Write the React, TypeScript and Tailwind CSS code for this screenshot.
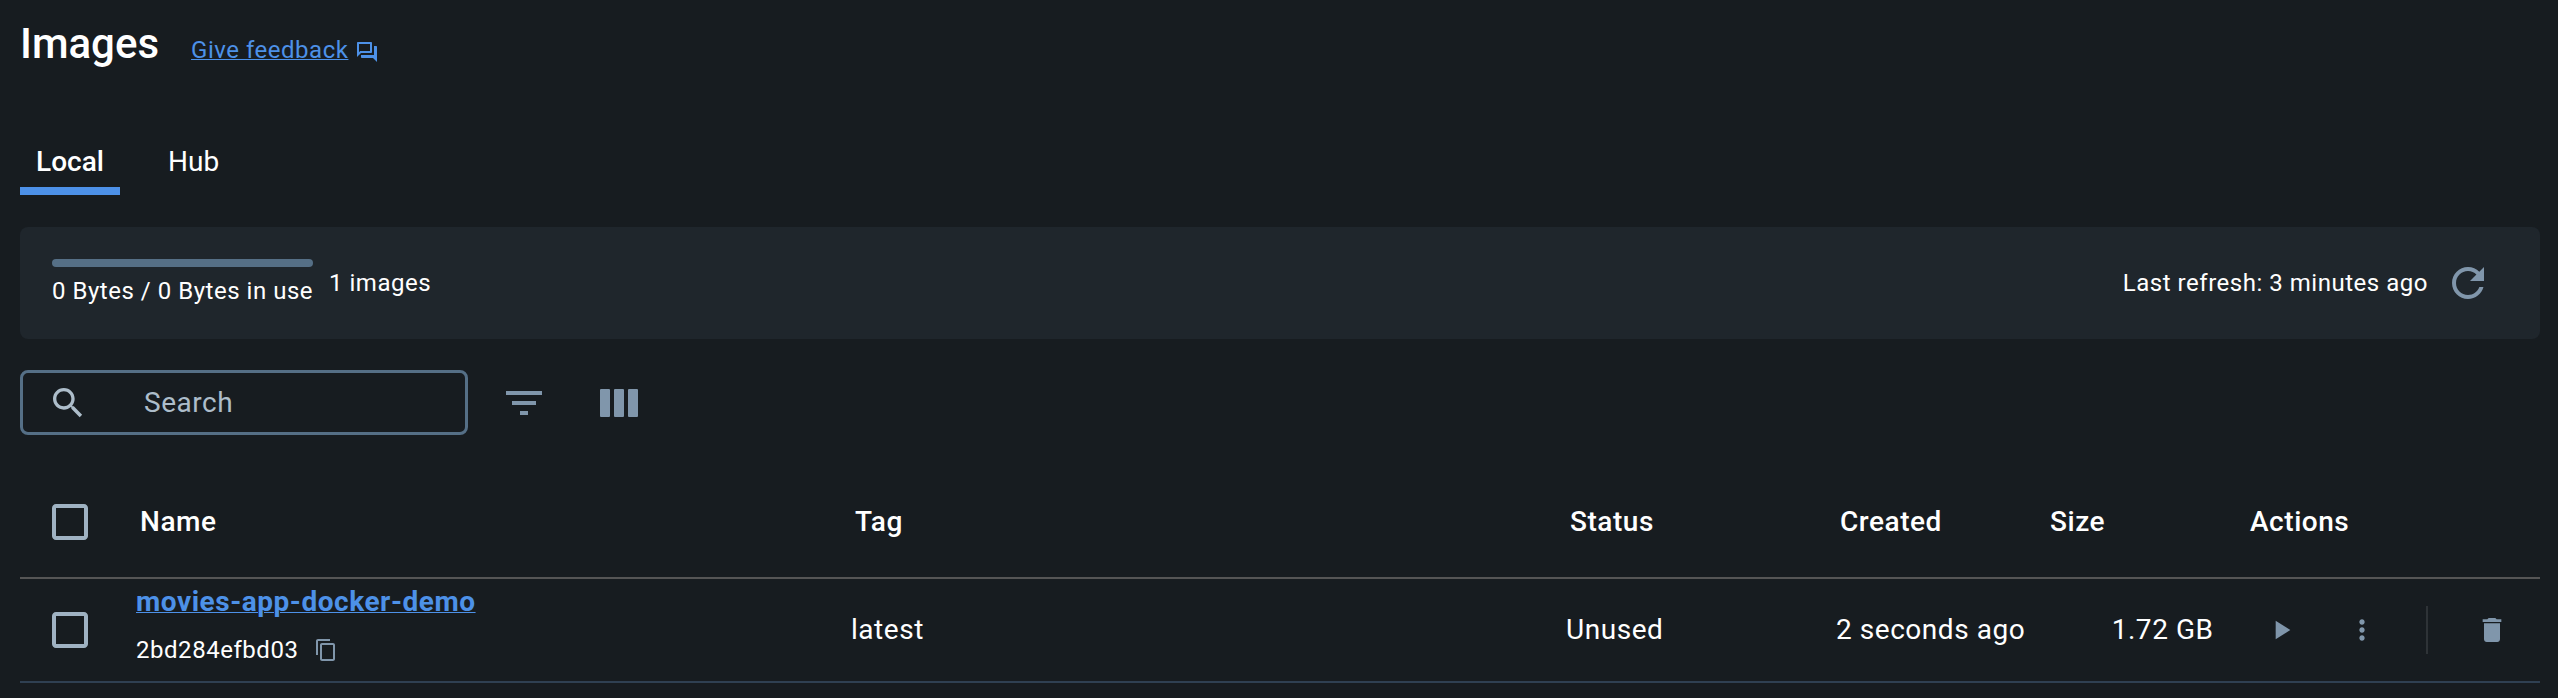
import React from "react";

type IconProps = { d: string; className: string };

function Icon({ d, className }: IconProps) {
  return (
    <svg viewBox="0 0 24 24" fill="currentColor" className={`block shrink-0 ${className}`}>
      <path d={d} />
    </svg>
  );
}

const icons = {
  feedback:
    "M15 4v7H5.17L4 12.17V4h11m1-2H3c-.55 0-1 .45-1 1v14l4-4h10c.55 0 1-.45 1-1V3c0-.55-.45-1-1-1zm5 4h-2v9H6v2c0 .55.45 1 1 1h11l4 4V7c0-.55-.45-1-1-1z",
  refresh:
    "M17.65 6.35C16.2 4.9 14.21 4 12 4c-4.42 0-7.99 3.58-7.99 8s3.57 8 7.99 8c3.73 0 6.84-2.55 7.73-6h-2.08c-.82 2.33-3.04 4-5.65 4-3.31 0-6-2.69-6-6s2.69-6 6-6c1.66 0 3.14.69 4.22 1.78L13 11h7V4l-2.35 2.35z",
  search:
    "M15.5 14h-.79l-.28-.27C15.41 12.59 16 11.11 16 9.5 16 5.91 13.09 3 9.5 3S3 5.91 3 9.5 5.91 16 9.5 16c1.61 0 3.09-.59 4.23-1.57l.27.28v.79l5 4.99L20.49 19l-4.99-5zm-6 0C7.01 14 5 11.99 5 9.5S7.01 5 9.5 5 14 7.01 14 9.5 11.99 14 9.5 14z",
  filter: "M10 18h4v-2h-4v2zM3 6v2h18V6H3zm3 7h12v-2H6v2z",
  columns:
    "M3 5h4q.5 0 .5.5v13q0 .5-.5.5H3q-.5 0-.5-.5v-13q0-.5.5-.5zM10 5h4q.5 0 .5.5v13q0 .5-.5.5h-4q-.5 0-.5-.5v-13q0-.5.5-.5zM17 5h4q.5 0 .5.5v13q0 .5-.5.5h-4q-.5 0-.5-.5v-13q0-.5.5-.5z",
  checkbox:
    "M19 5v14H5V5h14m0-2H5c-1.1 0-2 .9-2 2v14c0 1.1.9 2 2 2h14c1.1 0 2-.9 2-2V5c0-1.1-.9-2-2-2z",
  copy: "M16 1H4c-1.1 0-2 .9-2 2v14h2V3h12V1zm3 4H8c-1.1 0-2 .9-2 2v14c0 1.1.9 2 2 2h11c1.1 0 2-.9 2-2V7c0-1.1-.9-2-2-2zm0 16H8V7h11v14z",
  play: "M8 5v14l11-7z",
  more: "M12 8c1.1 0 2-.9 2-2s-.9-2-2-2-2 .9-2 2 .9 2 2 2zm0 2c-1.1 0-2 .9-2 2s.9 2 2 2 2-.9 2-2-.9-2-2-2zm0 6c-1.1 0-2 .9-2 2s.9 2 2 2 2-.9 2-2-.9-2-2-2z",
  trash: "M6 19c0 1.1.9 2 2 2h8c1.1 0 2-.9 2-2V7H6v12zM19 4h-3.5l-1-1h-5l-1 1H5v2h14V4z",
};

const columns =
  "grid grid-cols-[116px_715px_715px_270px_210px_200px_1fr] items-center border-b-2 leading-[33px] tracking-[0.54px]";

export default function App() {
  return (
    <div className="h-[698px] w-[2558px] overflow-hidden bg-[#171c20] pl-5 pr-[18px] font-[Roboto,sans-serif] text-[28px] text-white">
      <header className="flex h-[104px] items-start">
        <h1 className="mt-[19px] text-[42px] leading-[49px] font-medium">Images</h1>
        <a className="mt-9 ml-8 flex items-center text-[24px] leading-7 tracking-[0.52px] text-[#4d91e8]">
          <span className="underline decoration-1 underline-offset-1">Give feedback</span>
          <Icon d={icons.feedback} className="mt-1 ml-[6.5px] size-6" />
        </a>
      </header>

      <nav className="flex h-[91px] items-end gap-8">
        <div className="flex h-[60px] w-[100px] justify-center border-b-8 border-[#4d91e8] pt-[10px] leading-[33px] font-medium">
          Local
        </div>
        <div className="h-[60px] pt-[10px] pl-4 leading-[33px]">Hub</div>
      </nav>

      <section className="mt-8 flex h-28 items-center rounded-lg bg-[#1f262c] pr-12 pl-8 text-[24px] leading-8 tracking-[0.52px]">
        <div className="w-[261px]">
          <div className="h-2 rounded-full bg-[#556f86]" />
          <div className="mt-2 whitespace-nowrap">0 Bytes / 0 Bytes in use</div>
        </div>
        <div className="ml-4">1 images</div>
        <div className="ml-auto">Last refresh: 3 minutes ago</div>
        <Icon d={icons.refresh} className="ml-4 size-12 text-[#8096ab]" />
      </section>

      <div className="mt-[31px] flex h-[65px] items-center">
        <div className="flex h-full w-[448px] items-center rounded-lg border-3 border-[#556f86] pl-[25px] leading-[33px] tracking-[0.54px] text-[#adbdca]">
          <Icon d={icons.search} className="mt-px size-10" />
          <span className="ml-14">Search</span>
        </div>
        <Icon d={icons.filter} className="mt-px ml-8 size-12 text-[#8096ab]" />
        <Icon d={icons.columns} className="mt-px ml-[47px] size-12 text-[#8096ab]" />
      </div>

      <div className="mt-8">
        <div className={`${columns} h-[112px] border-[#555555] font-medium`}>
          <Icon d={icons.checkbox} className="ml-[26px] size-12 text-[#9fb2c2]" />
          <div className="pb-px pl-1">Name</div>
          <div className="pb-px pl-1">Tag</div>
          <div className="pb-px pl-1">Status</div>
          <div className="pb-px pl-1">Created</div>
          <div className="pb-px pl-1">Size</div>
          <div className="pb-px pl-1">Actions</div>
        </div>
        <div className={`${columns} h-[104px] border-[#2f4052]`}>
          <Icon d={icons.checkbox} className="ml-[26px] size-12 text-[#9fb2c2]" />
          <div className="self-start pt-1.5">
            <div className="font-bold text-[#4d91e8] underline decoration-1 underline-offset-1">
              movies-app-docker-demo
            </div>
            <div className="mt-[18px] flex items-center text-[24px] leading-7">
              2bd284efbd03
              <Icon d={icons.copy} className="ml-[15.5px] size-6 text-[#8096ab]" />
            </div>
          </div>
          <div className="pb-px">latest</div>
          <div className="pb-px">Unused</div>
          <div className="pb-px">2 seconds ago</div>
          <div className="w-[167.5px] pb-px text-right">1.72 GB</div>
          <div className="flex items-center text-[#8096ab]">
            <Icon d={icons.play} className="ml-[19.3px] size-8" />
            <Icon d={icons.more} className="ml-[48.7px] size-8" />
            <div className="ml-12 h-12 w-0.5 bg-[#2e3337]" />
            <Icon d={icons.trash} className="ml-12 size-8" />
          </div>
        </div>
      </div>
    </div>
  );
}
